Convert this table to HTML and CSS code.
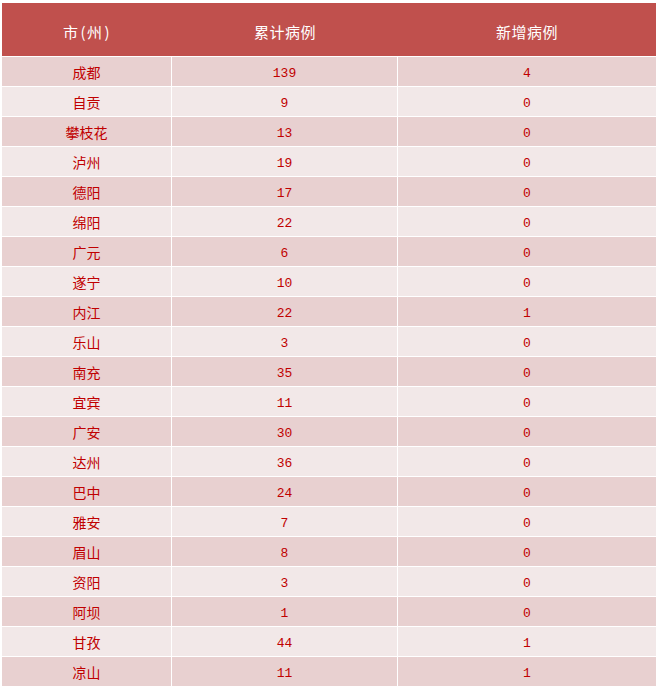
FILE: index.html
```html
<!DOCTYPE html>
<html lang="zh">
<head>
<meta charset="utf-8">
<title>四川省病例</title>
<link rel="stylesheet" href="styles.css">
</head>
<body>
<div class="table">
  <div class="head">
    <div class="hc c1"><span class="hs">市<span class="paren">(</span>州<span class="paren">)</span></span></div>
    <div class="hc c2">累计病例</div>
    <div class="hc c3">新增病例</div>
  </div>
  <div class="row odd"><div class="cell c1">成都</div><div class="cell c2 num">139</div><div class="cell c3 num">4</div></div>
  <div class="row even"><div class="cell c1">自贡</div><div class="cell c2 num">9</div><div class="cell c3 num">0</div></div>
  <div class="row odd"><div class="cell c1">攀枝花</div><div class="cell c2 num">13</div><div class="cell c3 num">0</div></div>
  <div class="row even"><div class="cell c1">泸州</div><div class="cell c2 num">19</div><div class="cell c3 num">0</div></div>
  <div class="row odd"><div class="cell c1">德阳</div><div class="cell c2 num">17</div><div class="cell c3 num">0</div></div>
  <div class="row even"><div class="cell c1">绵阳</div><div class="cell c2 num">22</div><div class="cell c3 num">0</div></div>
  <div class="row odd"><div class="cell c1">广元</div><div class="cell c2 num">6</div><div class="cell c3 num">0</div></div>
  <div class="row even"><div class="cell c1">遂宁</div><div class="cell c2 num">10</div><div class="cell c3 num">0</div></div>
  <div class="row odd"><div class="cell c1">内江</div><div class="cell c2 num">22</div><div class="cell c3 num">1</div></div>
  <div class="row even"><div class="cell c1">乐山</div><div class="cell c2 num">3</div><div class="cell c3 num">0</div></div>
  <div class="row odd"><div class="cell c1">南充</div><div class="cell c2 num">35</div><div class="cell c3 num">0</div></div>
  <div class="row even"><div class="cell c1">宜宾</div><div class="cell c2 num">11</div><div class="cell c3 num">0</div></div>
  <div class="row odd"><div class="cell c1">广安</div><div class="cell c2 num">30</div><div class="cell c3 num">0</div></div>
  <div class="row even"><div class="cell c1">达州</div><div class="cell c2 num">36</div><div class="cell c3 num">0</div></div>
  <div class="row odd"><div class="cell c1">巴中</div><div class="cell c2 num">24</div><div class="cell c3 num">0</div></div>
  <div class="row even"><div class="cell c1">雅安</div><div class="cell c2 num">7</div><div class="cell c3 num">0</div></div>
  <div class="row odd"><div class="cell c1">眉山</div><div class="cell c2 num">8</div><div class="cell c3 num">0</div></div>
  <div class="row even"><div class="cell c1">资阳</div><div class="cell c2 num">3</div><div class="cell c3 num">0</div></div>
  <div class="row odd"><div class="cell c1">阿坝</div><div class="cell c2 num">1</div><div class="cell c3 num">0</div></div>
  <div class="row even"><div class="cell c1">甘孜</div><div class="cell c2 num">44</div><div class="cell c3 num">1</div></div>
  <div class="row odd"><div class="cell c1">凉山</div><div class="cell c2 num">11</div><div class="cell c3 num">1</div></div>
</div>
</body>
</html>
```
FILE: styles.css
```css
html, body {
  margin: 0;
  padding: 0;
  background: #ffffff;
}
body {
  font-family: "Noto Sans CJK SC", "Noto Sans", sans-serif;
  overflow: hidden;
}
.table {
  margin: 3px 2px 0 2px;
  width: 654px;
}
.head {
  display: flex;
  height: 53px;
  background: #c0504d;
  color: #ffffff;
  font-size: 15px;
}
.hc {
  display: flex;
  align-items: center;
  justify-content: center;
  padding-top: 4px;
  box-sizing: border-box;
  letter-spacing: 0.5px;
}
.paren {
  padding: 0 1px 0 2px;
}
.c1 { width: 170px; }
.c2 { width: 226px; }
.c3 { width: 258px; }
.row {
  display: flex;
  height: 30px;
  box-sizing: border-box;
  border-top: 1px solid #ffffff;
}
.row.odd { background: #e8d0d0; }
.row.even { background: #f2e8e8; }
.cell {
  display: flex;
  align-items: center;
  justify-content: center;
  color: #c00000;
  font-size: 14px;
  box-sizing: border-box;
  line-height: 1;
}
.cell.c1, .cell.c2 {
  border-right: 1px solid #ffffff;
}
.num {
  font-family: "Liberation Mono", "DejaVu Sans Mono", monospace;
  font-size: 13px;
  padding-top: 3px;
}
.row .c1 { padding-top: 1px; }
```
